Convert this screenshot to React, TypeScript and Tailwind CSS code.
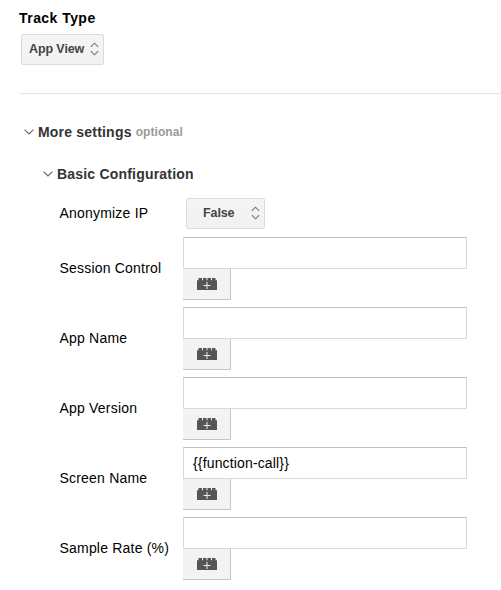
const Updown = () => (
  <svg width="9" height="14" viewBox="0 0 9 14" fill="none" stroke="#777" strokeWidth="1.1">
    <path d="M0.8 4.8 4.5 1.2 8.2 4.8M0.8 9.2 4.5 12.8 8.2 9.2" />
  </svg>
);

const Chevron = () => (
  <svg width="10" height="6" viewBox="0 0 10 6" fill="none" stroke="#666" strokeWidth="1.1">
    <path d="M0.6 0.6 5 5 9.4 0.6" />
  </svg>
);

const Brick = () => (
  <svg width="20" height="12" viewBox="0 0 20 12">
    <path
      fill="#555"
      d="M0 2.3H1.5V0H5V2.3H6V0H9.5V2.3H10.5V0H14V2.3H15V0H18.5V2.3H20V12H0Z"
    />
    <path stroke="#eee" d="M6.5 7.5H13.5M10 4V11" />
  </svg>
);

const selectBox =
  "flex h-[31px] items-center justify-between rounded-[2px] border border-[#dcdcdc] bg-linear-to-b from-[#f5f5f5] to-[#f1f1f1] pr-1 pb-px text-[12.5px] leading-[15px] font-bold tracking-[-0.1px] text-[#444]";

const Field = ({ label, value = "" }: { label: string; value?: string }) => (
  <div className="mb-[7px] flex h-[63px] items-center">
    <label className="w-[123.5px] shrink-0 pb-0.5 whitespace-nowrap">{label}</label>
    <div className="w-[284px]">
      <input
        readOnly
        value={value}
        className="block h-8 w-full border border-[#d9d9d9] border-t-[#c0c0c0] bg-white px-[9px] tracking-[0.15px] text-black outline-none"
      />
      <button className="flex h-[31px] w-12 items-center justify-center border-r border-b border-[#c6c6c6] bg-[#f3f3f3]">
        <Brick />
      </button>
    </div>
  </div>
);

export default function App() {
  return (
    <main className="h-[590px] w-[501px] overflow-hidden bg-white pl-[19px] font-['Liberation_Sans',Arial,sans-serif] text-[14px] leading-5 tracking-[0.2px] text-black">
      <h2 className="pt-2 font-bold tracking-[0.45px]">Track Type</h2>
      <div className={`${selectBox} mt-1.5 ml-0.5 w-[83px] pl-[7px]`}>
        App View <Updown />
      </div>
      <hr className="mt-7 border-[#e5e5e5]" />
      <div className="mt-[27px] ml-[5px] flex items-center gap-1 font-bold text-[#333]">
        <Chevron />
        <span>More settings</span>
        <span className="pt-px text-[12px] tracking-[0.08px] text-[#999]">optional</span>
      </div>
      <div className="mt-[22px] ml-6 flex items-center gap-1 font-bold text-[#333]">
        <Chevron />
        <span>Basic Configuration</span>
      </div>
      <section className="mt-3.5 ml-[40.5px]">
        <div className="mb-2 flex items-center">
          <span className="w-[126.5px] pb-0.5">Anonymize IP</span>
          <div className={`${selectBox} w-[79px] pl-4`}>
            False <Updown />
          </div>
        </div>
        <Field label="Session Control" />
        <Field label="App Name" />
        <Field label="App Version" />
        <Field label="Screen Name" value="{{function-call}}" />
        <Field label="Sample Rate (%)" />
      </section>
    </main>
  );
}
